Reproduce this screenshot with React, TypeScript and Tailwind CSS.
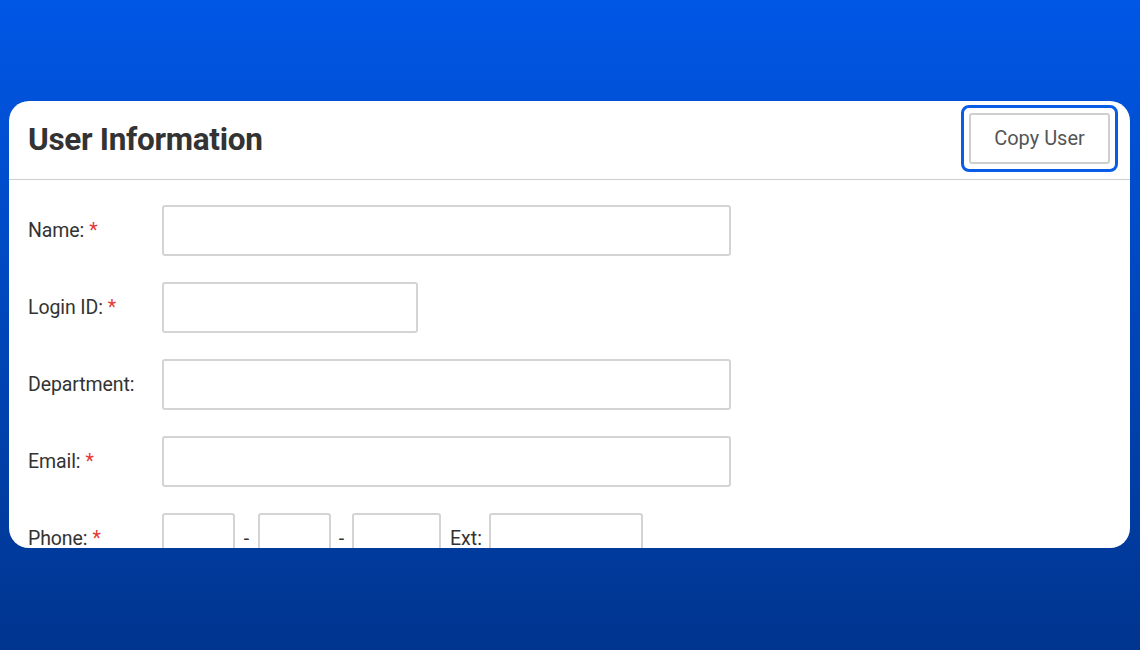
import React from 'react';

const Req = () => <span className="ml-[5px] text-[#e53935]">*</span>;

const Field = ({ className = '' }: { className?: string }) => (
  <input
    type="text"
    className={`h-[51px] rounded-[3px] border-2 border-[#d4d4d4] bg-white px-3 outline-none ${className}`}
  />
);

const Row = ({ label, required, children }: { label: string; required?: boolean; children: React.ReactNode }) => (
  <div className="flex items-center">
    <div className="w-[134px] shrink-0 text-[19.5px] tracking-[-0.1px] text-[#333]">
      {label}
      {required && <Req />}
    </div>
    {children}
  </div>
);

export default function App() {
  return (
    <div
      className="flex h-[650px] w-[1140px] flex-col bg-gradient-to-b from-[#0057e6] to-[#00358f] px-[9px] pt-[101px]"
      style={{ fontFamily: 'Roboto, "Liberation Sans", sans-serif' }}
    >
      <div className="h-[447px] w-[1121px] overflow-hidden rounded-[20px] bg-white">
        <div className="flex h-[79px] items-center justify-between border-b border-[#cfcfcf] pl-[19px] pr-[12px]">
          <h1 className="text-[31.5px] font-bold tracking-[-0.3px] text-[#333]">User Information</h1>
          <div className="mb-[4px] rounded-[8px] border-[3px] border-[#0a5ce6] p-[5px]">
            <button className="h-[51px] w-[141px] rounded-[3px] border-2 border-[#cfcfcf] bg-white text-[20px] text-[#555]">
              Copy User
            </button>
          </div>
        </div>
        <div className="flex flex-col gap-[26px] pl-[19px] pt-[25px]">
          <Row label="Name:" required>
            <Field className="w-[569px]" />
          </Row>
          <Row label="Login ID:" required>
            <Field className="w-[256px]" />
          </Row>
          <Row label="Department:">
            <Field className="w-[569px]" />
          </Row>
          <Row label="Email:" required>
            <Field className="w-[569px]" />
          </Row>
          <Row label="Phone:" required>
            <div className="flex items-center text-[19.5px] text-[#333]">
              <Field className="w-[73px]" />
              <span className="w-[23px] text-center">-</span>
              <Field className="w-[73px]" />
              <span className="w-[21px] text-center">-</span>
              <Field className="w-[89px]" />
              <span className="ml-[9px] mr-[7px]">Ext:</span>
              <Field className="w-[154px]" />
            </div>
          </Row>
        </div>
      </div>
    </div>
  );
}
